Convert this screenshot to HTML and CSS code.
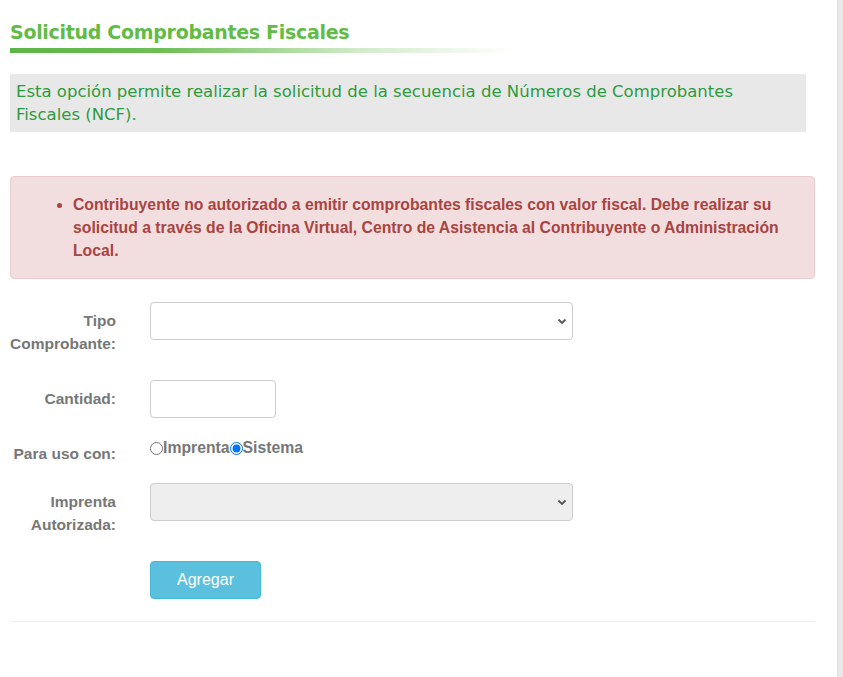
FILE: index.html
```html
<!DOCTYPE html>
<html lang="es">
<head>
    <meta charset="UTF-8">
    <meta name="viewport" content="width=device-width, initial-scale=1.0">
    <title>Solicitud Comprobantes Fiscales</title>
    <link rel="stylesheet" href="styles.css">
</head>
<body>
    <div class="page">
        <div class="content">
            <h1 class="titulo">Solicitud Comprobantes Fiscales</h1>
            <div class="titulo-linea"></div>

            <div class="descripcion">
                Esta opción permite realizar la solicitud de la secuencia de Números de Comprobantes Fiscales (NCF).
            </div>

            <div class="alert">
                <ul>
                    <li>Contribuyente no autorizado a emitir comprobantes fiscales con valor fiscal. Debe realizar su solicitud a través de la Oficina Virtual, Centro de Asistencia al Contribuyente o Administración Local.</li>
                </ul>
            </div>

            <form class="formulario" onsubmit="return false;">
                <div class="fila fila-tipo">
                    <label class="etiqueta" for="tipo">Tipo Comprobante:</label>
                    <div class="select-caja">
                        <select id="tipo" class="control control-select"></select>
                        <svg class="flecha" width="10" height="7" viewBox="0 0 10 7"><path d="M1.5 1.5 L5 5 L8.5 1.5" fill="none" stroke="#555" stroke-width="1.8"/></svg>
                    </div>
                </div>

                <div class="fila fila-cantidad">
                    <label class="etiqueta" for="cantidad">Cantidad:</label>
                    <input type="text" id="cantidad" class="control control-corto">
                </div>

                <div class="fila fila-uso">
                    <label class="etiqueta etiqueta-uso">Para uso con:</label>
                    <div class="opciones">
                        <input type="radio" name="uso" id="usoImprenta"><label for="usoImprenta">Imprenta</label><input type="radio" name="uso" id="usoSistema" checked><label for="usoSistema">Sistema</label>
                    </div>
                </div>

                <div class="fila fila-imprenta">
                    <label class="etiqueta" for="imprenta">Imprenta Autorizada:</label>
                    <div class="select-caja">
                        <select id="imprenta" class="control control-select" disabled></select>
                        <svg class="flecha" width="10" height="7" viewBox="0 0 10 7"><path d="M1.5 1.5 L5 5 L8.5 1.5" fill="none" stroke="#555" stroke-width="1.8"/></svg>
                    </div>
                </div>

                <div class="fila fila-boton">
                    <span></span>
                    <button type="submit" class="boton">Agregar</button>
                </div>
            </form>

            <hr class="separador">
        </div>
        <div class="borde"></div>
    </div>
</body>
</html>
```

FILE: styles.css
```css
body {
    margin: 0;
    background: #fff;
    font-family: "Liberation Sans", Arial, sans-serif;
}
.page {
    display: flex;
    min-height: 677px;
}
.content {
    width: 805px;
    padding: 0 22px 0 10px;
}
.borde {
    width: 5px;
    background: #e9e9e9;
    border-left: 1px solid #dcdcdc;
}
.titulo {
    margin: 20px 0 0;
    font-family: "DejaVu Sans", Verdana, sans-serif;
    font-size: 19px;
    line-height: 24px;
    color: #62bb46;
    letter-spacing: -0.3px;
}
.titulo-linea {
    width: 502px;
    height: 5px;
    margin-top: 4px;
    background: linear-gradient(to right, #5cb546 0%, #6dbf55 30%, rgba(200, 230, 190, 0.8) 70%, rgba(255, 255, 255, 0) 100%);
}
.descripcion {
    width: 784px;
    margin-top: 21px;
    padding: 6px 6px;
    background: #e8e8e8;
    color: #2e9a3e;
    font-family: "DejaVu Sans", Verdana, sans-serif;
    font-size: 16.5px;
    line-height: 23px;
}
.alert {
    margin-top: 44px;
    padding: 16px 15px;
    background: #f2dede;
    border: 1px solid #ebccd1;
    border-radius: 4px;
    color: #a94442;
    font-weight: bold;
    font-size: 15.75px;
    line-height: 23px;
}
.alert ul {
    margin: 0;
    padding-left: 47px;
}
.formulario {
    margin-top: 23px;
}
.fila {
    display: grid;
    grid-template-columns: 106px auto;
    column-gap: 34px;
    align-items: start;
    justify-items: start;
}
.fila-tipo {
    margin-bottom: 25px;
}
.fila-cantidad {
    margin-bottom: 22px;
}
.fila-uso {
    margin-bottom: 18px;
}
.fila-imprenta {
    margin-bottom: 25px;
}
.etiqueta {
    justify-self: end;
    text-align: right;
    padding-top: 7px;
    color: #777;
    font-weight: bold;
    font-size: 15.5px;
    line-height: 23px;
}
.etiqueta-uso {
    padding-top: 2px;
}
.control {
    box-sizing: border-box;
    height: 38px;
    border: 1px solid #ccc;
    border-radius: 4px;
    background-color: #fff;
    font-family: "Liberation Sans", Arial, sans-serif;
    font-size: 14px;
    padding: 6px 8px;
}
.select-caja {
    position: relative;
}
.control-select {
    display: block;
    width: 423px;
    appearance: none;
    -webkit-appearance: none;
}
.control-select:disabled {
    background-color: #eee;
    opacity: 1;
}
.flecha {
    position: absolute;
    right: 6px;
    top: 16px;
    pointer-events: none;
}
.control-corto {
    width: 126px;
}
.opciones {
    display: flex;
    align-items: center;
    color: #777;
    font-weight: bold;
    font-size: 15.75px;
    line-height: 16px;
}
.opciones input {
    margin: 0;
    width: 13px;
    height: 13px;
}
.boton {
    width: 111px;
    height: 38px;
    background: #5bc0de;
    border: 1px solid #46b8da;
    border-radius: 4px;
    color: #fff;
    font-family: "Liberation Sans", Arial, sans-serif;
    font-size: 16px;
    cursor: pointer;
}
.boton:hover {
    background: #31b0d5;
}
.separador {
    margin: 22px 0 0;
    border: 0;
    border-top: 1px solid #eee;
}
```
